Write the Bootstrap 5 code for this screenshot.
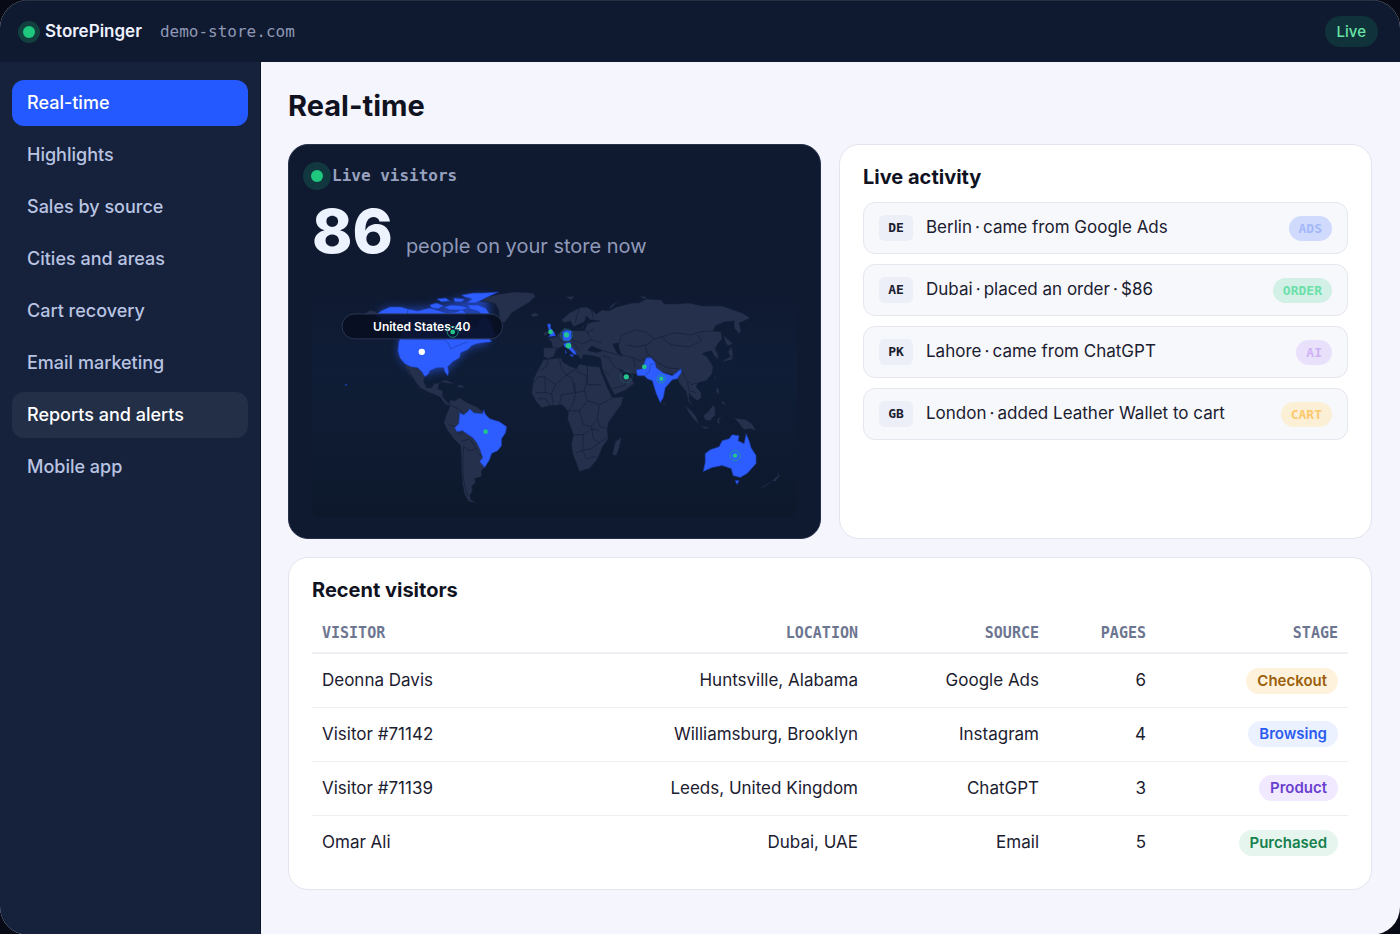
<!DOCTYPE html>
<html lang="en">
<head>
<meta charset="utf-8">
<meta name="viewport" content="width=device-width, initial-scale=1">
<title>StorePinger – Real-time</title>
<link href="https://cdn.jsdelivr.net/npm/bootstrap@5.3.0/dist/css/bootstrap.min.css" rel="stylesheet">
<style>
  :root { --ui: Inter, "Liberation Sans", sans-serif; --mono: "DejaVu Sans Mono", "Liberation Mono", monospace; }
  body { background: #080b16; font-family: var(--ui); color: #1b2030; }
  .app-frame { min-height: 100vh; border-radius: 28px; overflow: hidden; background: #f4f5fd; }
  .topbar { height: 62px; background: #0f1930; padding: 0 22px 0 23px; border-top: 1px solid #272f40; }
  .brand { font-size: 17px; font-weight: 600; color: #eef2ff; text-decoration: none; margin: 0 18px 0 10px; }
  .domain { font-family: var(--mono); font-size: 16px; color: #8e98b5; }
  .live-dot { width: 12px; height: 12px; border-radius: 50%; background: #1ec87f; box-shadow: 0 0 0 5px #12403f; flex: none; }
  .live-dot.wide { box-shadow: 0 0 0 8px #12383f; margin: 0 9px 0 -1px; }
  .live-pill { background: #10323a; color: #68e4a8; font-size: 15px; line-height: 31px; padding: 0 12px; font-weight: 500; }
  .sidebar { width: 261px; flex: none; gap: 6px; background: #16213c; border-right: 1px solid #0c1428; padding: 18px 12px; }
  .side-link { height: 46px; line-height: 46px; padding: 0 15px; border-radius: 12px; color: #b9c4e2; font-size: 18px; font-weight: 500; text-decoration: none; }
  .side-link.current { background: #2459ff; color: #fff; }
  .side-link.hovered { background: #232e47; color: #fff; }
  .content { padding: 26px 28px 45px 27px; }
  h1 { font-size: 29px; line-height: 36px; font-weight: 700; color: #10131f; margin-bottom: 20px; }
  h2 { font-size: 20px; line-height: 24px; font-weight: 700; color: #10131f; margin: 0; }
  .tiles { --bs-gutter-x: 18px; --bs-gutter-y: 18px; }
  .panel { border: 1px solid #e3e5ee; border-radius: 20px; background: #fff; padding: 20px 23px; }
  .panel.dark { background: #0f1930; border-color: #27304a; }
  .label-mono { font-family: var(--mono); font-size: 16px; line-height: 22px; font-weight: 700; color: #98a2bf; }
  .headline { margin-top: 12px; gap: 13px; }
  .count { font-size: 61px; line-height: 64px; font-weight: 800; color: #edf2ff; }
  .count-note { font-size: 20px; line-height: 28px; color: #8f9ab9; font-weight: 400; }
  .map { display: block; width: 100%; height: auto; margin-top: 10px; }
  .land { fill: #25304d; stroke: #141e37; }
  .live { fill: #2d5cff; stroke: #1b3aa5; }
  .line { fill: none; stroke: #141e37; }
  .feed { gap: 10px; margin-top: 13px; }
  .feed-row { height: 52px; gap: 13px; border: 1px solid #e4e7ef; border-radius: 12px; background: #f7f8fc; padding: 0 15px; font-size: 17px; }
  .code { background: #eceef8; border-radius: 6px; width: 34px; height: 26px; line-height: 26px; font-family: var(--mono); font-size: 13px; font-weight: 700; text-align: center; flex: none; }
  .tag { font-family: var(--mono); font-size: 13px; line-height: 25px; font-weight: 700; padding: 0 10px; }
  .tag-ads { background: #cfdafd; color: #a4b8f8; }
  .tag-order { background: #d2f0e6; color: #6ce0ab; }
  .tag-ai { background: #e9e1fb; color: #cfb2f6; }
  .tag-cart { background: #fbefd6; color: #fbc96c; }
  .visitors { margin: 11px 0 0; font-size: 17px; table-layout: fixed; --bs-table-bg: transparent; --bs-table-color: #1b2030; }
  .visitors > :not(caption) > * > * { padding: 0 10px; text-align: right; vertical-align: middle; border-bottom: 1px solid #eeeff3; }
  .visitors th { height: 40px; font-family: var(--mono); font-size: 15px; color: #6d7690; border-bottom-width: 2px !important; }
  .visitors td { height: 54px; }
  .visitors > * > * > :first-child { text-align: left; }
  .visitors tbody tr:last-child td { border-bottom: 0; }
  .col-source { width: 181px; }
  .col-pages { width: 107px; }
  .col-stage { width: 192px; }
  .col-visitor { width: 260px; }
  .stage { display: inline-block; font-size: 15px; line-height: 26px; font-weight: 600; padding: 0 11px; }
  .st-checkout { background: #fff2dc; color: #9c5f0c; }
  .st-browsing { background: #ecf1ff; color: #2a5cf0; }
  .st-product { background: #f1e9ff; color: #6a3fd0; }
  .st-purchased { background: #e6f6ee; color: #16804f; }
</style>
</head>
<body>
<div class="app-frame d-flex flex-column">
  <header class="topbar d-flex align-items-center justify-content-between">
    <div class="d-flex align-items-center">
      <span class="live-dot"></span>
      <a href="#" class="brand">StorePinger</a>
      <span class="domain">demo-store.com</span>
    </div>
    <span class="live-pill rounded-pill">Live</span>
  </header>
  <div class="d-flex flex-grow-1">
    <nav class="sidebar d-flex flex-column" aria-label="Main">
      <a href="#" class="side-link current" aria-current="page">Real-time</a>
      <a href="#" class="side-link">Highlights</a>
      <a href="#" class="side-link">Sales by source</a>
      <a href="#" class="side-link">Cities and areas</a>
      <a href="#" class="side-link">Cart recovery</a>
      <a href="#" class="side-link">Email marketing</a>
      <a href="#" class="side-link hovered">Reports and alerts</a>
      <a href="#" class="side-link">Mobile app</a>
    </nav>
    <main class="content flex-grow-1">
      <h1>Real-time</h1>
      <div class="row tiles">
        <section class="col-6">
          <div class="panel dark h-100">
            <div class="d-flex align-items-center label-mono"><span class="live-dot wide"></span>Live visitors</div>
            <div class="headline d-flex align-items-baseline"><span class="count">86</span><span class="count-note">people on your store now</span></div>
            <svg class="map" viewBox="312 272 486 246" role="img" aria-label="World map of live visitors">
              <defs>
                <filter id="glow" x="-20%" y="-20%" width="140%" height="140%"><feGaussianBlur stdDeviation="5"/></filter>
                <linearGradient id="sea" x1="0" y1="0" x2="0" y2="1"><stop offset="0" stop-color="#0f1930"/><stop offset=".4" stop-color="#0f1d36"/><stop offset="1" stop-color="#0d182b"/></linearGradient>
              </defs>
              <rect x="312" y="272" width="486" height="246" rx="10" fill="url(#sea)"/>
              <path d="M377 312L390 307L408 308L430 307L470 296L490 295L488 310L492 330L486 343L470 346L460 356L449 366L448 374L444 367L425 374L405 363L398 352L402 330Z" fill="#2d5cff" opacity=".6" filter="url(#glow)"/>
              <g class="land" stroke-width=".6" stroke-linejoin="round">
                <path d="M480 300L487 296L500 293L516 291L533 292L536 295L529 302L520 307L512 312L508 318L504 322L500 317L499 309L496 303L488 301Z"/>
                <path d="M531 314L535 312L539 313L538 315L533 316Z"/>
                <path d="M364 314L370 309L378 311L372 315Z"/>
                <path d="M405 363L412 365L418 367L422 371L425 374L424 381L427 387L432 387L434 383L440 382L438 388L443 390L443 396L448 402L452 402L451 405L446 404L440 396L430 392L420 387L415 380L410 372L408 368L411 375L413 379L409 374L406 367Z"/>
                <path d="M440 381L446 379L455 383L450 383ZM457 385L462 384L465 387L459 387Z"/>
                <path d="M450 399L455 400L460 397L466 401L472 404L477 406L482 410L490 417L500 423L495 445L485 467L482 470L482 476L475 478L476 482L472 486L473 490L470 495L471 499L476 502L469 501L465 494L463 484L462 470L461 445L454 438L448 430L444 422L447 413L450 406Z"/>
                <path d="M544 359L552 358L562 357L563 361L570 365L577 368L580 363L588 365L600 366L602 372L605 379L608 387L613 397L624 396L622 404L616 412L609 422L608 430L609 438L603 446L601 452L597 460L590 468L580 471L577 463L573 453L572 443L574 434L568 418L569 411L563 404L550 405L542 407L536 400L532 392L533 385L534 378L538 370Z"/>
                <path d="M622 436L616 441L614 449L613 454L617 455L620 447Z"/>
                <path d="M544 356L544 347L553 347L552 341L548 338L556 336L563 329L565 326L567 329L582 330L583 325L587 323L592 321L600 320L591 319L587 315L585 321L578 324L574 326L571 320L565 322L562 319L570 312L580 307L587 306L592 309L597 313L603 309L610 310L617 306L633 302L639 302L647 298L662 299L665 303L677 303L690 302L703 305L723 305L743 312L751 317L745 320L740 322L742 330L740 333L735 327L735 320L725 321L716 325L714 330L722 331L723 338L718 344L716 348L719 354L719 359L715 355L712 350L708 351L703 353L708 356L711 361L714 366L713 373L707 380L699 382L697 386L702 392L702 397L698 400L692 395L690 392L690 399L694 405L689 401L687 391L683 386L680 382L677 375L665 372L656 368L647 372L641 374L634 373L627 372L620 368L624 375L632 377L635 383L625 390L615 394L609 382L603 369L601 357L593 355L584 354L582 359L577 353L571 346L565 344L557 349L554 356L549 358Z"/>
                <path d="M609 309L612 304L620 300L616 303L612 307ZM566 296L575 295L572 299ZM640 295L648 296L645 298Z"/>
                <path d="M544 332L548 330L548 334L545 335Z"/>
                <path d="M686 405L691 409L697 416L700 424L694 418L689 411ZM700 425L707 426L712 428L706 428ZM704 415L709 411L714 404L716 407L716 414L711 420L706 419ZM718 418L723 416L720 419L721 424L718 422ZM735 417L740 418L747 419L753 423L757 430L751 428L745 429L740 423ZM717 386L720 389L720 394L717 391ZM724 400L727 404L722 403ZM664 401L666 403L664 405ZM724 361L733 359L734 352L732 346L729 351L731 356L725 359ZM724 334L727 343L729 345L734 343L727 337ZM715 375L717 377L716 380Z"/>
                <path d="M760 488L770 482L773 481L766 486ZM773 480L779 475L778 471L781 475L776 481Z"/>
              </g>
              <path fill="#0f1c34" d="M588 350L592 345L597 347L604 350L597 352ZM613 343L619 342L620 348L623 356L618 353ZM582 330L586 322L587 316L590 320L598 319L588 323L585 330Z"/>
              <g class="line" stroke-width=".7">
                <path d="M560 358L562 368L567 374L556 384L545 376L538 376L534 382M549 358L547 366L540 370M545 376L546 392L536 392M556 384L552 393L546 392M567 374L577 368M588 365L588 384L602 384M577 370L588 376L585 390L576 392L575 382M567 374L573 378L575 392L562 394L560 404M585 390L588 400L600 404L612 398M576 392L574 402L569 410L580 410L588 400M600 404L598 416L600 426L609 428M580 410L584 424L592 426L598 418M573 434L584 434L592 428L600 430M584 434L583 450L577 452M583 450L592 448L600 442L609 436M583 450L587 458L597 456M592 426L594 438L600 442M538 398L546 398L550 405M552 393L554 405"/>
                <path d="M553 347L562 348M557 335L563 341M572 330L573 339L583 343L592 339M583 325L588 332L592 339L602 342M573 341L580 350M592 309L594 318M580 308L577 316L576 322M603 355L610 357L614 365L620 369M604 350L612 352L618 354M622 354L634 357L641 360M620 343L622 334L636 329L646 331L655 338L648 344L636 346L628 344M655 338L662 336L676 332L693 334L700 331L714 330M662 336L672 344L690 346L702 340L698 334M646 346L648 352L656 360L668 367L680 368M610 375L603 368M613 388L625 385L627 379M634 357L636 367M641 360L650 354M683 370L687 379L692 384L698 382M688 381L690 390L697 392M594 328L588 332M450 404L462 410L463 415M449 424L456 426L460 434L463 431M461 441L470 438L477 448L470 450L464 446L463 460L464 480L468 496M482 456L477 451"/>
              </g>
              <g class="live" stroke-width=".6" stroke-linejoin="round">
                <path d="M375 315L381 310L390 306L401 306L408 308L418 310L430 307L437 309L447 312L457 311L462 308L467 313L466 319L470 323L477 328L480 319L486 316L491 322L493 328L496 334L490 338L492 341L483 342L477 343L472 345L468 349L461 352L460 357L453 361L448 366L449 371L448 375L445 371L444 367L437 367L430 370L429 373L425 376L422 371L418 367L411 366L405 363L400 357L398 350L399 341L402 333L404 322L394 318L384 320L378 324L382 317Z"/>
                <path d="M430 304L437 302L444 305L438 308L432 307ZM444 306L452 304L462 305L470 307L462 309L450 309ZM437 298L446 297L450 300L442 301ZM454 297L465 298L462 301L455 301ZM462 294L474 292L484 292L499 291L490 295L482 299L476 302L467 302L472 298L465 296ZM468 304L478 304L486 307L490 313L484 315L478 310L470 308Z"/>
                <path d="M460 412L464 414L468 411L470 408L474 412L483 413L484 409L486 414L490 418L500 421L507 426L506 432L502 438L502 445L498 450L492 453L490 459L485 467L480 461L483 457L480 448L477 442L473 437L467 433L463 430L457 431L455 427L459 423Z"/>
                <path d="M548 323L551 323L551 327L555 332L556 335L549 336L552 332L549 328ZM563 331L567 329L572 330L572 337L570 340L564 340L563 336ZM564 343L571 341L571 345L576 351L577 354L574 353L568 347L565 346ZM570 354L574 354L573 356ZM566 349L567 352L566 353Z"/>
                <path d="M637 369L643 368L645 362L647 357L652 357L656 362L657 367L664 372L673 375L682 368L682 372L678 378L673 379L666 387L664 397L661 402L657 393L653 380L648 378L645 375L638 375Z"/>
                <path d="M706 453L711 449L720 446L723 440L730 438L733 434L740 435L739 440L745 443L747 433L750 440L752 447L757 455L757 463L748 473L741 477L734 475L732 468L723 465L713 467L704 471L706 462ZM736 480L740 480L738 484Z"/>
                <circle cx="346" cy="384" r=".7"/>
              </g>
              <path d="M402 338L445 339L449 343L451 348L460 344L468 341M408 308L407 322M645 375L650 371L651 364L656 362" fill="none" stroke="#2146bd" stroke-width=".8"/>
              <rect x="342" y="313" width="161" height="25" rx="12.5" fill="#080e20" fill-opacity=".9" stroke="#2a3654"/>
              <text x="422" y="330" text-anchor="middle" font-family="Inter, sans-serif" font-size="12" font-weight="600" fill="#fff">United States·40</text>
              <circle cx="422" cy="351" r="3.2" fill="#fff"/>
              <g fill="#22c58b"><circle cx="453" cy="331" r="2.4"/><circle cx="486" cy="431" r="2.3"/><circle cx="551" cy="331" r="2.4"/><circle cx="567" cy="334" r="2.6"/><circle cx="569" cy="345" r="2.8"/><circle cx="627" cy="376" r="2.6"/><circle cx="645" cy="366" r="2.4"/><circle cx="662" cy="378" r="2.2"/><circle cx="736" cy="455" r="2.2"/></g>
              <g fill="none" stroke="#1ba883" stroke-width="1" opacity=".75"><circle cx="453" cy="331" r="5.5"/><circle cx="662" cy="378" r="4.2"/><circle cx="736" cy="455" r="5"/><circle cx="567" cy="334" r="6" opacity=".5"/><circle cx="627" cy="376" r="6" opacity=".3"/></g>
            </svg>
          </div>
        </section>
        <section class="col-6">
          <div class="panel h-100">
            <h2>Live activity</h2>
            <div class="feed d-flex flex-column">
              <div class="feed-row d-flex align-items-center"><span class="code">DE</span><span class="flex-grow-1">Berlin&thinsp;·&thinsp;came from Google Ads</span><span class="tag tag-ads rounded-pill">ADS</span></div>
              <div class="feed-row d-flex align-items-center"><span class="code">AE</span><span class="flex-grow-1">Dubai&thinsp;·&thinsp;placed an order&thinsp;·&thinsp;$86</span><span class="tag tag-order rounded-pill">ORDER</span></div>
              <div class="feed-row d-flex align-items-center"><span class="code">PK</span><span class="flex-grow-1">Lahore&thinsp;·&thinsp;came from ChatGPT</span><span class="tag tag-ai rounded-pill">AI</span></div>
              <div class="feed-row d-flex align-items-center"><span class="code">GB</span><span class="flex-grow-1">London&thinsp;·&thinsp;added Leather Wallet to cart</span><span class="tag tag-cart rounded-pill">CART</span></div>
            </div>
          </div>
        </section>
        <section class="col-12">
          <div class="panel">
            <h2>Recent visitors</h2>
            <table class="table visitors">
              <colgroup><col class="col-visitor"><col><col class="col-source"><col class="col-pages"><col class="col-stage"></colgroup>
              <thead><tr><th>VISITOR</th><th>LOCATION</th><th>SOURCE</th><th>PAGES</th><th>STAGE</th></tr></thead>
              <tbody>
                <tr><td>Deonna Davis</td><td>Huntsville, Alabama</td><td>Google Ads</td><td>6</td><td><span class="stage st-checkout rounded-pill">Checkout</span></td></tr>
                <tr><td>Visitor #71142</td><td>Williamsburg, Brooklyn</td><td>Instagram</td><td>4</td><td><span class="stage st-browsing rounded-pill">Browsing</span></td></tr>
                <tr><td>Visitor #71139</td><td>Leeds, United Kingdom</td><td>ChatGPT</td><td>3</td><td><span class="stage st-product rounded-pill">Product</span></td></tr>
                <tr><td>Omar Ali</td><td>Dubai, UAE</td><td>Email</td><td>5</td><td><span class="stage st-purchased rounded-pill">Purchased</span></td></tr>
              </tbody>
            </table>
          </div>
        </section>
      </div>
    </main>
  </div>
</div>
<script src="https://cdn.jsdelivr.net/npm/bootstrap@5.3.0/dist/js/bootstrap.bundle.min.js"></script>
</body>
</html>
